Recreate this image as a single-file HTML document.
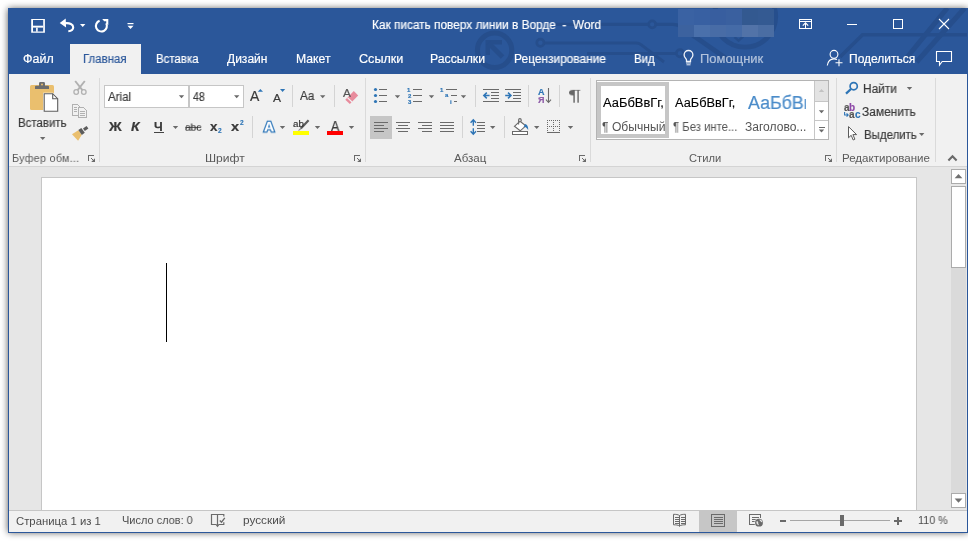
<!DOCTYPE html>
<html lang="ru">
<head>
<meta charset="utf-8">
<title>Как писать поверх линии в Ворде - Word</title>
<style>
*{box-sizing:border-box;margin:0;padding:0}
html,body{width:968px;height:541px;overflow:hidden;background:#fff}
body{font-family:"Liberation Sans","DejaVu Sans",sans-serif;font-size:12px;color:#444;position:relative}
.win *{position:absolute}
.t{white-space:nowrap;line-height:20px;height:20px;transform-origin:0 0;will-change:transform;-webkit-text-stroke:0.18px currentColor}
.win{position:absolute;left:8px;top:8px;width:960px;height:525px;background:#e6e6e6;
  box-shadow:0 0.3px 7px 0 rgba(0,0,0,.66)}
.frame{left:0;top:0;width:960px;height:525px;border:1px solid #2b579a;border-top:none;z-index:50}
.blue{left:0;top:0;width:960px;height:66px;background:#2b579a;overflow:hidden}
.tabact{left:62px;top:36px;width:71px;height:31px;background:#f1f1f1}
.ribbon{left:0;top:66px;width:960px;height:93px;background:#f1f1f1;border-bottom:1px solid #d4d4d4}
.gsep{top:70px;width:1px;height:84px;background:#dadada}
.sep{width:1px;height:22px;background:#d4d4d4}
.inp{background:#fff;border:1px solid #c6c6c6;height:23px;top:77px}
.dd{width:0;height:0;border-left:3px solid transparent;border-right:3px solid transparent;border-top:3px solid #666}
.page{left:33px;top:169px;width:876px;height:334px;background:#fff;border:1px solid #c6c6c6;border-bottom:none}
.caret{left:158px;top:255px;width:1px;height:79px;background:#000}
.vscroll{left:942px;top:159px;width:17px;height:343px;background:#e6e6e6}
.status{left:1px;top:502px;width:958px;height:22px;background:#f1f1f1;border-top:1px solid #c6c6c6}
svg{overflow:visible}
</style>
</head>
<body>
<div class="win">
<div class="blue"><div class="tabact"></div></div>
<div class="ribbon"></div>
<div class="gsep" style="left:91px"></div>
<div class="gsep" style="left:357px"></div>
<div class="gsep" style="left:582px"></div>
<div class="gsep" style="left:828px"></div>
<div class="gsep" style="left:927px"></div>
<div class="page"></div>
<div class="caret"></div>
<div class="vscroll"></div>
<div class="status"></div>

<svg width="960" height="525" viewBox="8 8 960 525" style="left:0;top:0">
<svg x="9" y="8" width="958" height="66" viewBox="9 8 958 66" style="overflow:hidden;position:static">
<g fill="none" stroke="#264e8c" stroke-linecap="butt" stroke-linejoin="miter">
<circle cx="494.6" cy="50.3" r="17.2" stroke-width="5"/>
<path d="M502 42.3H487.7V55" stroke-width="4.4"/>
<path d="M488.5 43L502.5 57" stroke-width="5"/>
<circle cx="540.4" cy="42.8" r="3.6" stroke-width="2.7"/>
<path d="M544.6 42.9H636Q639 42.9 641 44.6L664 62" stroke-width="3"/>
<path d="M587 53.6H676" stroke-width="3"/>
<circle cx="680" cy="53.2" r="3.6" stroke-width="2.7"/>
<circle cx="652.2" cy="24.4" r="3.5" stroke-width="2.7"/>
<path d="M555 24.4H648.2M656.2 24.4H673Q678 24.4 682 27.5" stroke-width="3.1"/>
<path d="M681 27L727 59" stroke-width="4.6"/>
<circle cx="745" cy="16.5" r="30.7" stroke-width="4.8"/>
<path d="M734.5 37.2L738.6 40.6L743.2 36.4" stroke-width="2.4"/>
<path d="M840 57L862.6 34.8H968" stroke-width="3.6"/>
<path d="M947.3 8L906.5 58M964.7 8L916.6 62" stroke-width="5"/>
</g>
</svg>
<rect x="678" y="9" width="16" height="16" fill="#3a62a3" shape-rendering="crispEdges"/>
<rect x="694" y="9" width="16" height="16" fill="#3860a2" shape-rendering="crispEdges"/>
<rect x="710" y="9" width="16" height="16" fill="#385e9f" shape-rendering="crispEdges"/>
<rect x="726" y="9" width="16" height="16" fill="#3a609f" shape-rendering="crispEdges"/>
<rect x="742" y="9" width="16" height="16" fill="#335990" shape-rendering="crispEdges"/>
<rect x="758" y="9" width="16" height="16" fill="#345a92" shape-rendering="crispEdges"/>
<rect x="678" y="25" width="16" height="12" fill="#3c629f" shape-rendering="crispEdges"/>
<rect x="694" y="25" width="16" height="12" fill="#4a70ab" shape-rendering="crispEdges"/>
<rect x="710" y="25" width="16" height="12" fill="#486ca6" shape-rendering="crispEdges"/>
<rect x="726" y="25" width="16" height="12" fill="#456ba7" shape-rendering="crispEdges"/>
<rect x="742" y="25" width="16" height="12" fill="#5273a8" shape-rendering="crispEdges"/>
<rect x="758" y="25" width="16" height="12" fill="#4a6da3" shape-rendering="crispEdges"/>
<path d="M31.2 18.9H44.9V32.8H31.2Z M33 20.1V31.6H43.2V20.1Z" fill="#ffffff" fill-rule="evenodd"/>
<rect x="33" y="25.7" width="10.2" height="1.9" fill="#ffffff" />
<rect x="36.1" y="27.6" width="1.6" height="4.1" fill="#ffffff" />
<path d="M59.7 22.9L65.7 18.4L66.1 27.4Z" fill="#ffffff" />
<path d="M64.5 23.3C70 22.6 73.2 24.4 73.2 27.3C73.2 29.6 71 31.1 68.3 31.3" fill="none" stroke="#ffffff" stroke-width="2.1" />
<path d="M80 24h5.4l-2.7 3z" fill="#ffffff"/>
<path d="M99.6 20.8A5.5 5.5 0 1 0 106.2 23.3" fill="none" stroke="#ffffff" stroke-width="2.1" />
<path d="M102.2 19.1H108.3V25L106.2 23.2V21.2H104.2Z" fill="#ffffff" />
<rect x="127.5" y="23" width="6" height="1.2" fill="#ffffff" />
<path d="M127.5 25.7h6l-3 3.3z" fill="#ffffff" />
<g shape-rendering="crispEdges">
<path d="M799 19h13v10h-13z M800 20v8h11v-8z" fill="#ffffff" fill-rule="evenodd"/>
<rect x="800" y="21" width="11" height="1" fill="#ffffff" />
<rect x="805" y="23" width="1" height="5" fill="#ffffff" />
</g>
<path d="M802.8 25.6l2.7-2.7 2.7 2.7" fill="none" stroke="#ffffff" stroke-width="1.2" />
<rect x="847" y="24" width="10" height="1" fill="#ffffff" shape-rendering="crispEdges"/>
<path d="M893.5 19.5h9v9h-9z" fill="none" stroke="#ffffff" stroke-width="1" shape-rendering="crispEdges"/>
<path d="M939 19l10 10M949 19l-10 10" fill="none" stroke="#ffffff" stroke-width="1.1" />
<path d="M686.5 61.5v-1.6c0-1.2-2.4-2.4-2.4-5a4.4 4.4 0 0 1 8.8 0c0 2.6-2.4 3.8-2.4 5v1.6z" fill="none" stroke="#f0f3f9" stroke-width="1.3" />
<rect x="686" y="62.5" width="5" height="1" fill="#e8edf5" />
<rect x="686.5" y="64.3" width="4" height="1" fill="#e8edf5" />
<circle cx="834" cy="54.3" r="3.9" fill="none" stroke="#ffffff" stroke-width="1.1"/>
<path d="M827.3 65.5c0.6-4 3-6.6 6.7-6.6c1.2 0 2.2 0.3 3 0.7" fill="none" stroke="#ffffff" stroke-width="1.1" />
<path d="M835.5 62.8h7M839 59.3v7" fill="none" stroke="#ffffff" stroke-width="1.1" />
<path d="M936.5 51.5h15v10h-9.3l-2.7 3.6v-3.6h-3z" fill="none" stroke="#ffffff" stroke-width="1.1" />
<rect x="30" y="85" width="24" height="25" rx="1.5" fill="#eabf6e"/>
<path d="M35 89v-2.2a1 1 0 0 1 1-1h3v-2.3a1.4 1.4 0 0 1 1.4-1.4h3.2a1.4 1.4 0 0 1 1.4 1.4v2.3h3a1 1 0 0 1 1 1v2.2z" fill="#6d6d6d" />
<circle cx="42" cy="84.6" r="1" fill="#eabf6e"/>
<path d="M43.2 92.8h10l5 5v13.8h-15z" fill="#ffffff" />
<path d="M44.2 93.7h8.5l5 5v12.6h-13.5z" fill="#ffffff" stroke="#5c5c5c" stroke-width="1.1" />
<path d="M52.7 93.7v5h5" fill="none" stroke="#5c5c5c" stroke-width="1.1" />
<path d="M40 137h5.4l-2.7 3z" fill="#6a6a6a"/>
<g fill="none" stroke="#b1b1b1" stroke-width="1.3">
<path d="M75.2 81l7.2 9.2M84.8 81l-7.2 9.2" stroke-width="1.9"/>
<circle cx="76.2" cy="92" r="2.3"/><circle cx="83.8" cy="92" r="2.3"/>
</g>
<g fill="#f1f1f1" stroke="#b1b1b1" stroke-width="1" shape-rendering="crispEdges">
<path d="M72.5 104.5h5l2 2v8.5h-7z"/>
<path d="M78.5 107.5h5l3 3v7h-8z"/>
</g>
<g fill="#b1b1b1" shape-rendering="crispEdges">
<rect x="74" y="107" width="3" height="1" fill="#b1b1b1" />
<rect x="74" y="109" width="3" height="1" fill="#b1b1b1" />
<rect x="74" y="111" width="3" height="1" fill="#b1b1b1" />
<rect x="80" y="111" width="5" height="1" fill="#b1b1b1" />
<rect x="80" y="113" width="5" height="1" fill="#b1b1b1" />
<rect x="80" y="115" width="5" height="1" fill="#b1b1b1" />
</g>
<path d="M72 134.3l6.3-4 3.4 4.6-3.6 5.9z" fill="#eabf6e" />
<path d="M78.3 130.1l3-2.1 3.5 4.7-3 2.2z" fill="#5c5c5c" />
<path d="M83 128.6l3.6-2.6 1.8 2.4-3.6 2.6z" fill="#5c5c5c" />
<path d="M88 161v-6h6v1h-5v5z" fill="#6a6a6a" shape-rendering="crispEdges"/>
<path d="M91 158l3 3" fill="none" stroke="#6a6a6a" stroke-width="1" />
<path d="M95 158.2v3.8h-3.8z" fill="#6a6a6a" />
<path d="M354 161v-6h6v1h-5v5z" fill="#6a6a6a" shape-rendering="crispEdges"/>
<path d="M357 158l3 3" fill="none" stroke="#6a6a6a" stroke-width="1" />
<path d="M361 158.2v3.8h-3.8z" fill="#6a6a6a" />
<path d="M579 161v-6h6v1h-5v5z" fill="#6a6a6a" shape-rendering="crispEdges"/>
<path d="M582 158l3 3" fill="none" stroke="#6a6a6a" stroke-width="1" />
<path d="M586 158.2v3.8h-3.8z" fill="#6a6a6a" />
<path d="M825 161v-6h6v1h-5v5z" fill="#6a6a6a" shape-rendering="crispEdges"/>
<path d="M828 158l3 3" fill="none" stroke="#6a6a6a" stroke-width="1" />
<path d="M832 158.2v3.8h-3.8z" fill="#6a6a6a" />
<path d="M948.4 160.4l4.1-4.2 4.1 4.2" fill="none" stroke="#6a6a6a" stroke-width="2.1" />
<g shape-rendering="crispEdges">
<rect x="104" y="85" width="140" height="23" fill="#c6c6c6" />
<rect x="105" y="86" width="83" height="21" fill="#ffffff" />
<rect x="189.5" y="86" width="53.5" height="21" fill="#ffffff" />
</g>
<path d="M178.8 95.2h5.4l-2.7 3z" fill="#6a6a6a"/>
<path d="M234 95.2h5.4l-2.7 3z" fill="#6a6a6a"/>
<path d="M257.8 91.8l2.6-2.9 2.6 2.9z" fill="#2e75b6" />
<path d="M280 89l2.6 2.9 2.6-2.9z" fill="#2e75b6" />
<rect x="292" y="85" width="1" height="22" fill="#d4d4d4" shape-rendering="crispEdges"/>
<rect x="334" y="85" width="1" height="22" fill="#d4d4d4" shape-rendering="crispEdges"/>
<path d="M320 95.2h5.4l-2.7 3z" fill="#6a6a6a"/>
<path d="M345.3 99.8L353.8 91L358.2 95.4L349.8 104Z" fill="#e88b9c" />
<path d="M347.4 97.6l4.6 4.4" fill="none" stroke="#f1f1f1" stroke-width="1.2" />
<rect x="252" y="116" width="1" height="22" fill="#d4d4d4" shape-rendering="crispEdges"/>
<path d="M172.8 126h5.4l-2.7 3z" fill="#6a6a6a"/>
<path d="M279.8 126h5.4l-2.7 3z" fill="#6a6a6a"/>
<path d="M314.8 126h5.4l-2.7 3z" fill="#6a6a6a"/>
<path d="M348.8 126h5.4l-2.7 3z" fill="#6a6a6a"/>
<rect x="154" y="132" width="10" height="1" fill="#444444" shape-rendering="crispEdges"/>
<rect x="185.2" y="127" width="16" height="0.9" fill="#555" />
<rect x="293" y="131" width="16" height="4" fill="#ffff00" shape-rendering="crispEdges"/>
<path d="M308.6 120.2l-7.8 8.2" fill="none" stroke="#5c5c5c" stroke-width="2.2" />
<path d="M300.4 128l-2.6 2.8 2.2-0.6 1.6-1.6z" fill="#8a8a8a" />
<rect x="327" y="131" width="16" height="4" fill="#ff0000" shape-rendering="crispEdges"/>
<g shape-rendering="crispEdges">
<rect x="379" y="89" width="8" height="1" fill="#6a6a6a" />
<rect x="413" y="89" width="9" height="1" fill="#6a6a6a" />
<rect x="379" y="95" width="8" height="1" fill="#6a6a6a" />
<rect x="413" y="95" width="9" height="1" fill="#6a6a6a" />
<rect x="379" y="101" width="8" height="1" fill="#6a6a6a" />
<rect x="413" y="101" width="9" height="1" fill="#6a6a6a" />
<rect x="446" y="89" width="11" height="1" fill="#6a6a6a" />
<rect x="451" y="95" width="6" height="1" fill="#6a6a6a" />
<rect x="454" y="101" width="3" height="1" fill="#6a6a6a" />
<rect x="475" y="85" width="1" height="22" fill="#d4d4d4" />
<rect x="528" y="85" width="1" height="22" fill="#d4d4d4" />
<rect x="559" y="85" width="1" height="22" fill="#d4d4d4" />
<rect x="462" y="116" width="1" height="22" fill="#d4d4d4" />
<rect x="504" y="116" width="1" height="22" fill="#d4d4d4" />
<rect x="370" y="116" width="22" height="23" fill="#c6c6c6" />
<rect x="374" y="122" width="14" height="1" fill="#6a6a6a" />
<rect x="396" y="122" width="14" height="1" fill="#6a6a6a" />
<rect x="418" y="122" width="14" height="1" fill="#6a6a6a" />
<rect x="440" y="122" width="14" height="1" fill="#6a6a6a" />
<rect x="477" y="122" width="8" height="1" fill="#6a6a6a" />
<rect x="374" y="125" width="10" height="1" fill="#6a6a6a" />
<rect x="398" y="125" width="10" height="1" fill="#6a6a6a" />
<rect x="422" y="125" width="10" height="1" fill="#6a6a6a" />
<rect x="440" y="125" width="14" height="1" fill="#6a6a6a" />
<rect x="477" y="125" width="8" height="1" fill="#6a6a6a" />
<rect x="374" y="128" width="14" height="1" fill="#6a6a6a" />
<rect x="396" y="128" width="14" height="1" fill="#6a6a6a" />
<rect x="418" y="128" width="14" height="1" fill="#6a6a6a" />
<rect x="440" y="128" width="14" height="1" fill="#6a6a6a" />
<rect x="477" y="128" width="8" height="1" fill="#6a6a6a" />
<rect x="374" y="131" width="10" height="1" fill="#6a6a6a" />
<rect x="398" y="131" width="10" height="1" fill="#6a6a6a" />
<rect x="422" y="131" width="10" height="1" fill="#6a6a6a" />
<rect x="440" y="131" width="14" height="1" fill="#6a6a6a" />
<rect x="477" y="131" width="8" height="1" fill="#6a6a6a" />
<rect x="483" y="89" width="16" height="1" fill="#6a6a6a" />
<rect x="483" y="101" width="16" height="1" fill="#6a6a6a" />
<rect x="491" y="92" width="8" height="1" fill="#6a6a6a" />
<rect x="491" y="95" width="8" height="1" fill="#6a6a6a" />
<rect x="491" y="98" width="8" height="1" fill="#6a6a6a" />
<rect x="505" y="89" width="16" height="1" fill="#6a6a6a" />
<rect x="505" y="101" width="16" height="1" fill="#6a6a6a" />
<rect x="513" y="92" width="8" height="1" fill="#6a6a6a" />
<rect x="513" y="95" width="8" height="1" fill="#6a6a6a" />
<rect x="513" y="98" width="8" height="1" fill="#6a6a6a" />
<rect x="547" y="132" width="13" height="1" fill="#6a6a6a" />
<rect x="547" y="120" width="1" height="1" fill="#6a6a6a" />
<rect x="547" y="126" width="1" height="1" fill="#6a6a6a" />
<rect x="549" y="120" width="1" height="1" fill="#6a6a6a" />
<rect x="549" y="126" width="1" height="1" fill="#6a6a6a" />
<rect x="551" y="120" width="1" height="1" fill="#6a6a6a" />
<rect x="551" y="126" width="1" height="1" fill="#6a6a6a" />
<rect x="553" y="120" width="1" height="1" fill="#6a6a6a" />
<rect x="553" y="126" width="1" height="1" fill="#6a6a6a" />
<rect x="555" y="120" width="1" height="1" fill="#6a6a6a" />
<rect x="555" y="126" width="1" height="1" fill="#6a6a6a" />
<rect x="557" y="120" width="1" height="1" fill="#6a6a6a" />
<rect x="557" y="126" width="1" height="1" fill="#6a6a6a" />
<rect x="559" y="120" width="1" height="1" fill="#6a6a6a" />
<rect x="559" y="126" width="1" height="1" fill="#6a6a6a" />
<rect x="547" y="120" width="1" height="1" fill="#6a6a6a" />
<rect x="553" y="120" width="1" height="1" fill="#6a6a6a" />
<rect x="559" y="120" width="1" height="1" fill="#6a6a6a" />
<rect x="547" y="122" width="1" height="1" fill="#6a6a6a" />
<rect x="553" y="122" width="1" height="1" fill="#6a6a6a" />
<rect x="559" y="122" width="1" height="1" fill="#6a6a6a" />
<rect x="547" y="124" width="1" height="1" fill="#6a6a6a" />
<rect x="553" y="124" width="1" height="1" fill="#6a6a6a" />
<rect x="559" y="124" width="1" height="1" fill="#6a6a6a" />
<rect x="547" y="126" width="1" height="1" fill="#6a6a6a" />
<rect x="553" y="126" width="1" height="1" fill="#6a6a6a" />
<rect x="559" y="126" width="1" height="1" fill="#6a6a6a" />
<rect x="547" y="128" width="1" height="1" fill="#6a6a6a" />
<rect x="553" y="128" width="1" height="1" fill="#6a6a6a" />
<rect x="559" y="128" width="1" height="1" fill="#6a6a6a" />
<rect x="547" y="130" width="1" height="1" fill="#6a6a6a" />
<rect x="553" y="130" width="1" height="1" fill="#6a6a6a" />
<rect x="559" y="130" width="1" height="1" fill="#6a6a6a" />
<rect x="512" y="131" width="16" height="4" fill="#6a6a6a" />
<rect x="513" y="132" width="14" height="2" fill="#ffffff" />
</g>
<circle cx="375.5" cy="89.5" r="1.6" fill="#2e75b6"/>
<circle cx="375.5" cy="95.5" r="1.6" fill="#2e75b6"/>
<circle cx="375.5" cy="101.5" r="1.6" fill="#2e75b6"/>
<path d="M394.8 95.2h5.4l-2.7 3z" fill="#6a6a6a"/>
<path d="M428.8 95.2h5.4l-2.7 3z" fill="#6a6a6a"/>
<path d="M460.8 95.2h5.4l-2.7 3z" fill="#6a6a6a"/>
<path d="M490 126h5.4l-2.7 3z" fill="#6a6a6a"/>
<path d="M534 126h5.4l-2.7 3z" fill="#6a6a6a"/>
<path d="M567.8 126h5.4l-2.7 3z" fill="#6a6a6a"/>
<path d="M489.6 95.5h-5.6M486.8 92.6l-3 2.9 3 2.9" fill="none" stroke="#2e75b6" stroke-width="1.5" />
<path d="M505.2 95.5h5.6M508 92.6l3 2.9-3 2.9" fill="none" stroke="#2e75b6" stroke-width="1.5" />
<path d="M548.5 88v14M546 99.6l2.5 2.9 2.5-2.9" fill="none" stroke="#6a6a6a" stroke-width="1.1" />
<path d="M473.3 119.8v6M473.3 128.2v6M470.6 122.8l2.7-3 2.7 3M470.6 131.2l2.7 3 2.7-3" fill="none" stroke="#2e75b6" stroke-width="1.4" />
<path d="M514.4 126.3l5.6-5 5.8 4.5-5.6 5z" fill="#ffffff" stroke="#6a6a6a" stroke-width="1.1" />
<path d="M518.6 124.5v-4.6a1.3 1.3 0 0 1 2.6 0v1.6" fill="none" stroke="#6a6a6a" stroke-width="1.1" />
<path d="M525.4 124c1.8 0.8 3 2.6 2.8 6.2c-1.2-2-2.2-3-4.6-3.6z" fill="#2e75b6" />
<g shape-rendering="crispEdges">
<rect x="596" y="80" width="233" height="60" fill="#b4b4b4" />
<rect x="597" y="81" width="231" height="58" fill="#ffffff" />
<rect x="814" y="81" width="1" height="58" fill="#c6c6c6" />
<rect x="815" y="81" width="13" height="20" fill="#e3e3e3" />
<rect x="815" y="101" width="13" height="1" fill="#c6c6c6" />
<rect x="815" y="120" width="13" height="1" fill="#c6c6c6" />
<rect x="597" y="82" width="72" height="56" fill="#c6c6c6" />
<rect x="601" y="86" width="64" height="48" fill="#ffffff" />
<rect x="818.7" y="126.6" width="6" height="1.2" fill="#6a6a6a" />
</g>
<path d="M818.8 92l2.7-3 2.7 3z" fill="#c2c2c2" />
<path d="M818.8 110.3h5.4l-2.7 3z" fill="#6a6a6a"/>
<path d="M818.8 129.4h5.4l-2.7 3.2z" fill="#6a6a6a" />
<circle cx="853.7" cy="86.2" r="3.6" fill="none" stroke="#2e75b6" stroke-width="1.7"/>
<path d="M851 89l-5 4.6" fill="none" stroke="#2e75b6" stroke-width="2.3" />
<path d="M906.8 87h5.4l-2.7 3z" fill="#6a6a6a"/>
<path d="M919 133h5.4l-2.7 3z" fill="#6a6a6a"/>
<path d="M844.6 112v3h3.4M846.6 113.4l1.6 1.6-1.6 1.6" fill="none" stroke="#2e75b6" stroke-width="1.1" />
<path d="M848.5 126.6v11.2l2.7-2.5 2 4.7 1.7-0.8-2-4.6h3.7z" fill="#ffffff" stroke="#5c5c5c" stroke-width="1" />
<g shape-rendering="crispEdges">
<rect x="951" y="184" width="15" height="309" fill="#dadada" />
<rect x="951" y="184" width="15" height="2" fill="#e6e6e6" />
<rect x="951" y="169" width="15" height="15" fill="#ababab" />
<rect x="952" y="170" width="13" height="13" fill="#ffffff" />
<rect x="951" y="186" width="15" height="82" fill="#ababab" />
<rect x="952" y="187" width="13" height="80" fill="#ffffff" />
<rect x="951" y="493" width="15" height="15" fill="#ababab" />
<rect x="952" y="494" width="13" height="13" fill="#ffffff" />
</g>
<path d="M954.6 178.3l3.9-4.2 3.9 4.2z" fill="#707070" />
<path d="M954.6 498.6l3.9 4.2 3.9-4.2z" fill="#707070" />
<g shape-rendering="crispEdges">
<rect x="699" y="511" width="38" height="21" fill="#c6c6c6" />
<path d="M711 514h14v13h-14z M712 515v11h12v-11z" fill="#6a6a6a" fill-rule="evenodd"/>
<rect x="713.5" y="517" width="9" height="1" fill="#6a6a6a" />
<rect x="713.5" y="519" width="9" height="1" fill="#6a6a6a" />
<rect x="713.5" y="521" width="9" height="1" fill="#6a6a6a" />
<rect x="713.5" y="523" width="9" height="1" fill="#6a6a6a" />
<rect x="780" y="519.5" width="6" height="2" fill="#6a6a6a" />
<rect x="790" y="520" width="100" height="1" fill="#a6a6a6" />
<rect x="840" y="515" width="4" height="11" fill="#6a6a6a" />
<rect x="894" y="519.5" width="8" height="2" fill="#6a6a6a" />
<rect x="897" y="516.5" width="2" height="8" fill="#6a6a6a" />
</g>
<path d="M217.5 514.5H211.5V524.5H216L217.5 526.4L219 524.5H223.8V522.2M217.5 514.5H223.8V516.6M217.5 514.5V526.6" fill="none" stroke="#6a6a6a" stroke-width="1.2" />
<path d="M219.8 520.5l1.7 1.7 3.3-4.4" fill="none" stroke="#6a6a6a" stroke-width="1.3" />
<path d="M679.5 515.5v11M679.5 515.5c-1.5-1-3.5-1.2-6-1.2v10.5c2.5 0 4.5 0.2 6 1.2c1.5-1 3.5-1.2 6-1.2v-10.5c-2.5 0-4.5 0.2-6 1.2" fill="none" stroke="#6a6a6a" stroke-width="1" />
<rect x="675" y="517" width="3.5" height="1" fill="#6a6a6a" shape-rendering="crispEdges"/>
<rect x="681" y="517" width="3.5" height="1" fill="#6a6a6a" shape-rendering="crispEdges"/>
<rect x="675" y="519" width="3.5" height="1" fill="#6a6a6a" shape-rendering="crispEdges"/>
<rect x="681" y="519" width="3.5" height="1" fill="#6a6a6a" shape-rendering="crispEdges"/>
<rect x="675" y="521" width="3.5" height="1" fill="#6a6a6a" shape-rendering="crispEdges"/>
<rect x="681" y="521" width="3.5" height="1" fill="#6a6a6a" shape-rendering="crispEdges"/>
<rect x="675" y="523" width="3.5" height="1" fill="#6a6a6a" shape-rendering="crispEdges"/>
<rect x="681" y="523" width="3.5" height="1" fill="#6a6a6a" shape-rendering="crispEdges"/>
<path d="M757 514.5h-7.5v10h5" fill="none" stroke="#6a6a6a" stroke-width="1" shape-rendering="crispEdges"/>
<path d="M760.5 514.5v3" fill="none" stroke="#6a6a6a" stroke-width="1" shape-rendering="crispEdges"/>
<rect x="757" y="514" width="4" height="1" fill="#6a6a6a" shape-rendering="crispEdges"/>
<rect x="751.5" y="517" width="7" height="1" fill="#6a6a6a" shape-rendering="crispEdges"/>
<rect x="751.5" y="519" width="5" height="1" fill="#6a6a6a" shape-rendering="crispEdges"/>
<rect x="751.5" y="521" width="5" height="1" fill="#6a6a6a" shape-rendering="crispEdges"/>
<circle cx="759" cy="522.7" r="4.6" fill="#f1f1f1"/>
<circle cx="759" cy="522.7" r="3.9" fill="#6a6a6a"/>
<path d="M756.4 521.4c1.2-0.4 2 0.2 1.8 1.4c-0.2 1 0.8 1.2 0.6 2.4c-1.6-0.4-2.6-1.8-2.4-3.8zM759.6 519.6c1.6 0.2 2.6 1.2 2.8 2.6c-1 0.2-1.6-0.2-1.8-1c-0.8 0-1.2-0.8-1-1.6z" fill="#e4e4e4" />
</svg>
<div class="t" style="left:364.20px;top:7.00px;font-size:12px;color:#ffffff;transform:scaleX(0.9861);">Как писать поверх линии в Ворде&nbsp; -&nbsp; Word</div>
<div class="t" style="left:15.40px;top:41.00px;font-size:12px;color:#ffffff;transform:scaleX(1.0398);">Файл</div>
<div class="t" style="left:74.60px;top:41.00px;font-size:12px;color:#2b579a;transform:scaleX(0.9525);">Главная</div>
<div class="t" style="left:147.50px;top:41.00px;font-size:12px;color:#ffffff;transform:scaleX(0.9535);">Вставка</div>
<div class="t" style="left:218.90px;top:41.00px;font-size:12px;color:#ffffff;transform:scaleX(1.0027);">Дизайн</div>
<div class="t" style="left:288.00px;top:41.00px;font-size:12px;color:#ffffff;transform:scaleX(1.0154);">Макет</div>
<div class="t" style="left:350.50px;top:41.00px;font-size:12px;color:#ffffff;transform:scaleX(1.0500);">Ссылки</div>
<div class="t" style="left:422.40px;top:41.00px;font-size:12px;color:#ffffff;transform:scaleX(1.0213);">Рассылки</div>
<div class="t" style="left:506.20px;top:41.00px;font-size:12px;color:#ffffff;transform:scaleX(0.9923);">Рецензирование</div>
<div class="t" style="left:625.50px;top:41.00px;font-size:12px;color:#ffffff;transform:scaleX(0.9524);">Вид</div>
<div class="t" style="left:692.00px;top:41.00px;font-size:12px;color:#b3c3dc;transform:scaleX(1.0777);">Помощник</div>
<div class="t" style="left:840.50px;top:41.00px;font-size:12px;color:#ffffff;transform:none;">Поделиться</div>
<div class="t" style="left:9.70px;top:105.00px;font-size:12px;color:#3a3a3a;transform:scaleX(0.9552);">Вставить</div>
<div class="t" style="left:3.70px;top:140.00px;font-size:11px;color:#5a5a5a;transform:scaleX(0.9746);-webkit-text-stroke:0;letter-spacing:0.3px;">Буфер обм...</div>
<div class="t" style="left:100.40px;top:79.00px;font-size:12px;color:#3a3a3a;transform:scaleX(0.9614);">Arial</div>
<div class="t" style="left:184.60px;top:79.00px;font-size:12px;color:#3a3a3a;transform:scaleX(0.8777);">48</div>
<div class="t" style="left:197.00px;top:140.00px;font-size:11px;color:#5a5a5a;transform:scaleX(1.1002);-webkit-text-stroke:0;">Шрифт</div>
<div class="t" style="left:446.10px;top:140.00px;font-size:11px;color:#5a5a5a;transform:scaleX(1.0457);-webkit-text-stroke:0;">Абзац</div>
<div class="t" style="left:681.10px;top:140.00px;font-size:11px;color:#5a5a5a;transform:scaleX(1.0135);-webkit-text-stroke:0;">Стили</div>
<div class="t" style="left:833.90px;top:140.00px;font-size:11px;color:#5a5a5a;transform:scaleX(1.0500);-webkit-text-stroke:0;">Редактирование</div>
<div class="t" style="left:594.80px;top:85.00px;font-size:12px;color:#000000;transform:scaleX(1.0751);-webkit-text-stroke:0.12px #000;">АаБбВвГг,</div>
<div class="t" style="left:593.90px;top:109.00px;font-size:12px;color:#555;transform:scaleX(1.0098);-webkit-text-stroke:0;">¶ Обычный</div>
<div class="t" style="left:667.40px;top:85.00px;font-size:12px;color:#000000;transform:scaleX(1.0643);-webkit-text-stroke:0.12px #000;">АаБбВвГг,</div>
<div class="t" style="left:665.30px;top:109.00px;font-size:12px;color:#555;transform:scaleX(0.9433);-webkit-text-stroke:0;">¶ Без инте...</div>
<div style="left:737px;top:85.00px;width:61px;height:24px;overflow:hidden"><div class="t" style="left:2.60px;top:0;font-size:18px;color:#4a8bc9;transform:scaleX(0.9891);">АаБбВв</div></div>
<div class="t" style="left:737.30px;top:109.00px;font-size:12px;color:#555;transform:scaleX(1.0035);-webkit-text-stroke:0;">Заголово...</div>
<div class="t" style="left:854.90px;top:71.00px;font-size:12px;color:#3a3a3a;transform:scaleX(0.9880);">Найти</div>
<div class="t" style="left:854.30px;top:94.00px;font-size:12px;color:#3a3a3a;transform:scaleX(0.9942);">Заменить</div>
<div class="t" style="left:855.50px;top:117.00px;font-size:12px;color:#3a3a3a;transform:scaleX(0.9538);">Выделить</div>
<div class="t" style="left:7.60px;top:503.00px;font-size:11px;color:#4d4d4d;transform:scaleX(1.0297);-webkit-text-stroke:0;">Страница 1 из 1</div>
<div class="t" style="left:114.20px;top:502.00px;font-size:11px;color:#4d4d4d;transform:scaleX(0.9972);-webkit-text-stroke:0;">Число слов: 0</div>
<div class="t" style="left:234.70px;top:502.00px;font-size:11px;color:#4d4d4d;transform:scaleX(1.0739);-webkit-text-stroke:0;">русский</div>
<div class="t" style="left:910.10px;top:502.00px;font-size:11px;color:#4d4d4d;transform:scaleX(0.9795);-webkit-text-stroke:0;">110 %</div>
<div class="t" style="left:101.20px;top:109.00px;font-size:12px;color:#3a3a3a;transform:scaleX(1.1657);font-weight:bold;">Ж</div>
<div class="t" style="left:123.20px;top:109.00px;font-size:12px;color:#3a3a3a;transform:scaleX(1.1629);font-weight:bold;font-style:italic;">К</div>
<div class="t" style="left:146.30px;top:109.00px;font-size:12px;color:#3a3a3a;transform:scaleX(1.0337);font-weight:bold;">Ч</div>
<div class="t" style="left:176.80px;top:110.00px;font-size:11px;color:#333;transform:scale(0.9236,0.9074);">abc</div>
<div class="t" style="left:202.30px;top:109.00px;font-size:13px;color:#3a3a3a;transform:scaleX(1.0337);font-weight:bold;">x</div>
<div class="t" style="left:210.00px;top:113.00px;font-size:6.5px;color:#2e75b6;transform:none;font-weight:bold;">2</div>
<div class="t" style="left:222.70px;top:109.00px;font-size:13px;color:#3a3a3a;transform:scaleX(1.1198);font-weight:bold;">x</div>
<div class="t" style="left:232.00px;top:105.00px;font-size:6.5px;color:#2e75b6;transform:none;font-weight:bold;">2</div>
<div class="t" style="left:242.20px;top:78.40px;font-size:13.5px;color:#3a3a3a;transform:scale(1.0337,1.0458);">A</div>
<div class="t" style="left:264.90px;top:80.00px;font-size:11px;color:#3a3a3a;transform:scaleX(1.0940);">A</div>
<div class="t" style="left:292.40px;top:76.90px;font-size:12px;color:#3a3a3a;transform:scale(0.9739,1.0517);">Aa</div>
<div class="t" style="left:334.80px;top:74.20px;font-size:10px;color:#555;transform:scale(1.1814,1.1576);">A</div>
<div class="t" style="left:255.70px;top:109.10px;font-size:14px;color:#ffffff;transform:scale(1.0096,0.9613);-webkit-text-stroke:2.6px #2e75b6;paint-order:stroke fill;text-shadow:0 0 2px #7fb0e0;font-weight:bold;">A</div>
<div class="t" style="left:284.70px;top:105.50px;font-size:9px;color:#333;transform:scaleX(1.0827);">ab</div>
<div class="t" style="left:323.00px;top:108.10px;font-size:13px;color:#3a3a3a;transform:scale(0.9477,1.0682);">A</div>
<div class="t" style="left:399.00px;top:72.00px;font-size:6px;color:#2e75b6;transform:none;font-weight:bold;">1</div>
<div class="t" style="left:400.00px;top:78.00px;font-size:6px;color:#2e75b6;transform:none;font-weight:bold;">2</div>
<div class="t" style="left:400.00px;top:84.00px;font-size:6px;color:#2e75b6;transform:none;font-weight:bold;">3</div>
<div class="t" style="left:432.00px;top:72.00px;font-size:6px;color:#2e75b6;transform:none;font-weight:bold;">1</div>
<div class="t" style="left:437.00px;top:77.00px;font-size:6px;color:#2e75b6;transform:none;font-weight:bold;">a</div>
<div class="t" style="left:442.00px;top:84.00px;font-size:6px;color:#2e75b6;transform:none;font-weight:bold;">i</div>
<div class="t" style="left:530.00px;top:74.00px;font-size:9px;color:#2e75b6;transform:none;font-weight:bold;">A</div>
<div class="t" style="left:530.00px;top:82.00px;font-size:9px;color:#8e5ba8;transform:none;font-weight:bold;">Я</div>
<div class="t" style="left:560.20px;top:78.50px;font-size:16px;color:#666;transform:scale(1.5604,0.9351);-webkit-text-stroke:0;">¶</div>
<div class="t" style="left:836.00px;top:90.00px;font-size:10px;color:#555;transform:none;font-weight:bold;">a</div>
<div class="t" style="left:841.00px;top:90.00px;font-size:10px;color:#8e4aa8;transform:none;font-weight:bold;">b</div>
<div class="t" style="left:841.00px;top:97.00px;font-size:10px;color:#555;transform:none;font-weight:bold;">a</div>
<div class="t" style="left:847.00px;top:97.00px;font-size:10px;color:#2e75b6;transform:none;font-weight:bold;">c</div>
<div class="frame"></div>
</div>
</body>
</html>
